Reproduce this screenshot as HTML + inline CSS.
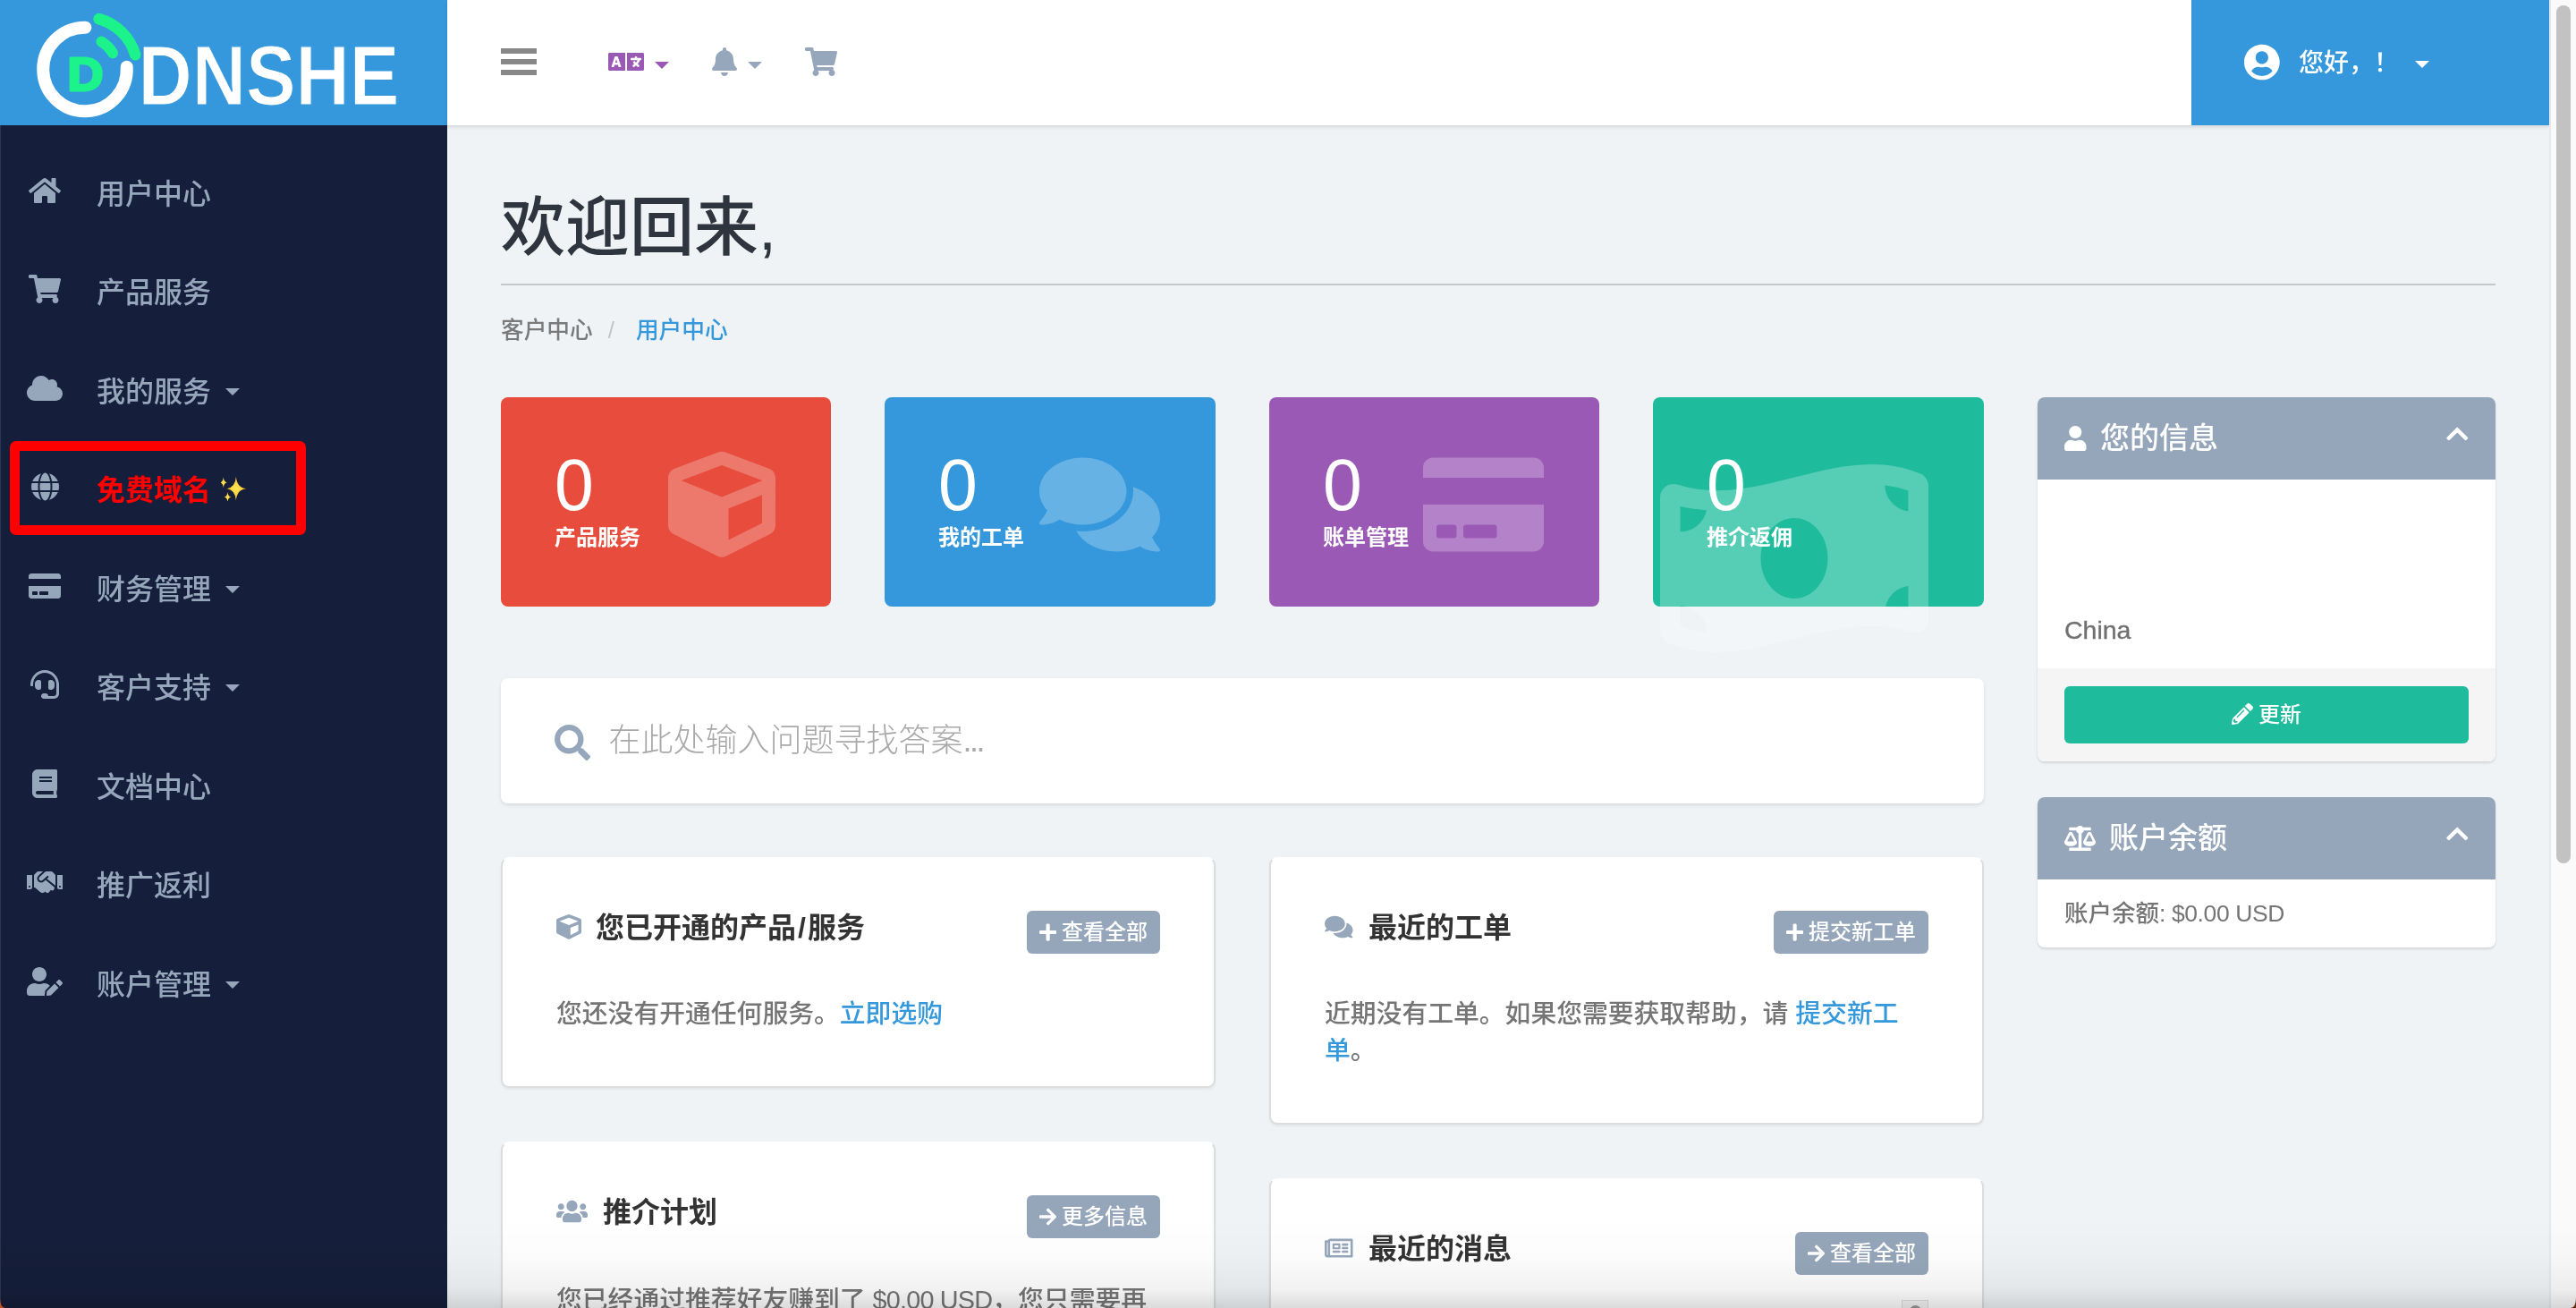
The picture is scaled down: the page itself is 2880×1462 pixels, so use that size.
<!DOCTYPE html>
<html lang="zh-CN">
<head>
<meta charset="utf-8">
<title>客户中心 - DNSHE</title>
<style>
*{box-sizing:border-box;margin:0;padding:0}
html,body{width:2880px;height:1462px;overflow:hidden;background:#eff3f6}
body{position:relative;background:#eff3f6;will-change:transform;font-family:"Liberation Sans","Noto Sans CJK SC",sans-serif;color:#757575;font-size:28px;font-weight:500}
a{color:#3498db;text-decoration:none}
svg{display:block}
.abs{position:absolute}
/* sidebar */
#sidebar{position:absolute;left:0;top:0;width:500px;height:1462px;background:#151e3a;box-shadow:inset 1px 0 0 rgba(255,255,255,.1)}
#logo{position:absolute;left:0;top:0;width:500px;height:140px;background:#3598dc}
.nav{position:absolute;left:0;width:500px;height:60px;color:#97a7bb;font-size:32px;line-height:60px;font-weight:500}
.nav .ic{position:absolute;left:30px;top:11px;width:40px;height:32px;fill:#97a7bb}
.nav .ic svg{margin:0 auto;height:32px}
.nav .tx{position:absolute;left:108px;top:1px;white-space:nowrap}
.caret{display:inline-block;width:0;height:0;border-left:8px solid transparent;border-right:8px solid transparent;border-top:8px solid currentColor;vertical-align:middle;margin-left:16px;position:relative;top:-3px}
#hl{position:absolute;left:11px;top:493px;width:331px;height:105px;border:11px solid #ff0000;border-radius:7px}
/* topbar */
#topbar{position:absolute;left:500px;top:0;width:2350px;height:140px;background:#fff;box-shadow:0 2px 4px rgba(0,0,0,.12)}
#user{position:absolute;left:2450px;top:0;width:400px;height:140px;background:#3598dc;color:#fff;font-size:28px}
#sb{position:absolute;left:2850px;top:0;width:30px;height:1462px;background:#fafafa;border-left:2px solid #e8e8e8}
#sb i{position:absolute;left:6px;top:6px;width:16px;height:959px;border-radius:8px;background:#c2c2c2}
/* content */
h1{position:absolute;left:560px;top:199px;font-size:72px;font-weight:500;color:#2f353e;line-height:110px;white-space:nowrap}
#hr{position:absolute;left:560px;top:317px;width:2230px;height:2px;background:#c3c7ca}
#bc{position:absolute;left:560px;top:349px;font-size:25.7px;line-height:40px;color:#7a7a7a;white-space:nowrap}
#bc span{color:#c4c4c4;margin:0 24px 0 17px}
.stat{position:absolute;top:444px;width:369.5px;height:233.5px;border-radius:8px;color:#fff}
.stat .n{position:absolute;left:60px;top:50px;font-size:82px;line-height:96px;transform:scaleX(.96);transform-origin:0 0}
.stat .l{position:absolute;left:60px;top:139px;font-size:24px;font-weight:700;line-height:36px;white-space:nowrap}
.sic{position:absolute;fill:rgba(255,255,255,.25)}
#search{position:absolute;left:560px;top:758px;width:1658px;height:140px;background:#fff;border-radius:8px;box-shadow:0 2px 4px rgba(0,0,0,.1)}
#search .ph{position:absolute;left:120.5px;top:40px;font-size:36px;line-height:60px;color:#a9a9a9;font-weight:300;white-space:nowrap}
.panel{position:absolute;width:799px;background:#fff;border:2px solid #dcdddd;border-top-color:transparent;border-radius:9px;box-shadow:0 2px 3px rgba(0,0,0,.05)}
.panel h3{position:absolute;left:105px;top:53px;font-size:32px;font-weight:700;color:#333;line-height:48px;white-space:nowrap}
.panel .pi{position:absolute;left:60px;fill:#97a7bb}
.panel .btn{position:absolute;right:60px;top:58px;height:48px;border-radius:6px;background:#96a6ba;color:#fff;font-size:24px;line-height:48px;padding:0 14px 0 14px;white-space:nowrap}
.panel .btn svg{display:inline-block;fill:#fff;height:22px;vertical-align:-3px;margin-right:6px}
.panel p{position:absolute;left:60px;top:153px;width:680px;font-size:28.8px;line-height:41px;color:#757575}
.side{position:absolute;left:2278px;width:512px;background:#fff;border-radius:8px;box-shadow:0 2px 3px rgba(0,0,0,.12);overflow:hidden}
.side .hd{height:92px;background:#96a6ba;color:#fff;font-size:33px;line-height:92px;position:relative}
.side .hd svg{position:absolute;fill:#fff}
.side .hd span{position:absolute;top:0;white-space:nowrap}
#shade{position:absolute;left:0;top:1362px;width:2880px;height:100px;background:linear-gradient(to bottom,rgba(0,0,0,0) 0%,rgba(0,0,0,.015) 45%,rgba(0,0,0,.055) 80%,rgba(0,0,0,.14) 100%);pointer-events:none}
.cnr{position:absolute;top:1450px;width:6px;height:12px}
</style>
</head>
<body>
<h1>欢迎回来,</h1><div id="hr"></div>
<div id="bc">客户中心<span>/</span><a>用户中心</a></div>
<div class="stat" style="left:560px;width:369px;background:#e74c3c"></div>
<div class="stat" style="left:989px;width:370px;background:#3598dc"></div>
<div class="stat" style="left:1419px;width:369px;background:#9b59b6"></div>
<div class="stat" style="left:1848px;width:370px;background:#1ebc9c"></div>
<svg class="sic" style="left:747px;top:504px" width="120.0" height="120" viewBox="0 0 512 512"><path d="M239.100 6.300l-208 78c-18.700 7-31.100 25-31.100 45v225.100c0 18.200 10.300 34.800 26.500 42.900l208 104c13.500 6.800 29.400 6.800 42.900 0l208-104c16.300-8.100 26.500-24.800 26.500-42.900V129.300c0-20-12.400-37.900-31.100-44.900l-208-78C262 2.200 250 2.200 239.100 6.300zM256 68.400l192 72v1.100l-192 78-192-78v-1.100l192-72zm32 356V275.500l160-65v133.900l-160 80z"/></svg>
<svg class="sic" style="left:1162px;top:504px" width="135.0" height="120" viewBox="0 0 576 512"><path d="M416 192c0-88.400-93.100-160-208-160S0 103.600 0 192c0 34.300 14.100 65.900 38 92-13.400 30.200-35.500 54.200-35.800 54.500-2.200 2.300-2.800 5.700-1.500 8.700S4.800 352 8 352c36.600 0 66.900-12.300 88.700-25 32.200 15.700 70.300 25 111.300 25 114.900 0 208-71.600 208-160zm122 220c23.900-26 38-57.700 38-92 0-66.900-53.500-124.200-129.300-148.100.9 6.600 1.300 13.300 1.300 20.100 0 105.900-107.700 192-240 192-10.800 0-21.300-.8-31.700-1.900C207.800 439.600 281.800 480 368 480c41 0 79.100-9.200 111.300-25 21.800 12.700 52.100 25 88.700 25 3.200 0 6.100-1.900 7.300-4.800 1.300-2.900.7-6.300-1.500-8.700-.3-.3-22.400-24.200-35.800-54.500z"/></svg>
<svg class="sic" style="left:1591px;top:504px" width="135.0" height="120" viewBox="0 0 576 512"><path d="M0 432c0 26.5 21.5 48 48 48h480c26.500 0 48-21.500 48-48V256H0v176zm192-68c0-6.600 5.400-12 12-12h136c6.600 0 12 5.400 12 12v40c0 6.600-5.400 12-12 12H204c-6.600 0-12-5.400-12-12v-40zm-128 0c0-6.600 5.400-12 12-12h72c6.600 0 12 5.400 12 12v40c0 6.600-5.400 12-12 12H76c-6.600 0-12-5.400-12-12v-40zM576 80v48H0V80c0-26.500 21.500-48 48-48h480c26.500 0 48 21.500 48 48z"/></svg>
<svg class="sic" style="left:1856px;top:504px" width="300.0" height="240" viewBox="0 0 640 512"><path d="M621.160 54.460C582.370 38.190 543.550 32 504.750 32c-123.170-.01-246.330 62.340-369.500 62.340-30.890 0-61.760-3.920-92.650-13.720-3.470-1.100-6.950-1.620-10.350-1.620C15.040 79 0 92.320 0 110.810v317.260c0 12.630 7.230 24.600 18.840 29.460C57.630 473.810 96.450 480 135.250 480c123.170 0 246.340-62.350 369.510-62.350 30.890 0 61.760 3.920 92.650 13.720 3.470 1.100 6.950 1.620 10.350 1.620 17.210 0 32.250-13.320 32.250-31.810V83.930c-.01-12.640-7.240-24.600-18.850-29.470zM48 132.220c20.120 5.040 41.120 7.570 62.720 8.930C104.840 170.540 79 192.690 48 192.690v-60.470zm0 285v-47.780c34.370 0 62.180 27.270 63.710 61.400-22.530-1.810-43.590-6.310-63.710-13.620zM320 352c-44.190 0-80-42.990-80-96 0-53.020 35.820-96 80-96s80 42.980 80 96c0 53.030-35.830 96-80 96zm272 27.780c-17.520-4.390-35.710-6.850-54.320-8.440 5.870-26.080 27.500-45.880 54.320-49.280v57.720zm0-236.110c-30.890-3.910-54.860-29.700-55.810-61.550 19.540 2.170 38.090 6.230 55.810 12.660v48.890z"/></svg>
<div class="stat" style="left:560px"><div class="n">0</div><div class="l">产品服务</div></div>
<div class="stat" style="left:989px"><div class="n">0</div><div class="l">我的工单</div></div>
<div class="stat" style="left:1419px"><div class="n">0</div><div class="l">账单管理</div></div>
<div class="stat" style="left:1848px"><div class="n">0</div><div class="l">推介返佣</div></div>
<div id="search"><svg style="position:absolute;left:60px;top:52px;fill:#97a7bb" width="40.0" height="40" viewBox="0 0 512 512"><path d="M505 442.700L405.300 343c-4.500-4.500-10.600-7-17-7H372c27.600-35.300 44-79.700 44-128C416 93.100 322.900 0 208 0S0 93.100 0 208s93.100 208 208 208c48.300 0 92.700-16.400 128-44v16.300c0 6.400 2.500 12.500 7 17l99.700 99.700c9.400 9.400 24.600 9.400 33.900 0l28.300-28.300c9.400-9.400 9.400-24.600.1-34zM208 336c-70.700 0-128-57.200-128-128 0-70.700 57.200-128 128-128 70.700 0 128 57.200 128 128 0 70.700-57.200 128-128 128z"/></svg><span class="ph">在此处输入问题寻找答案<span style="letter-spacing:-2.500px">...</span></span></div>
<div class="panel" style="left:560px;top:958px;height:258px"><svg class="pi" style="top:62px" width="28.0" height="28" viewBox="0 0 512 512"><path d="M239.100 6.300l-208 78c-18.700 7-31.100 25-31.100 45v225.100c0 18.200 10.300 34.800 26.500 42.900l208 104c13.500 6.800 29.400 6.800 42.900 0l208-104c16.300-8.100 26.500-24.800 26.500-42.900V129.300c0-20-12.400-37.900-31.100-44.900l-208-78C262 2.200 250 2.200 239.100 6.300zM256 68.400l192 72v1.100l-192 78-192-78v-1.100l192-72zm32 356V275.500l160-65v133.900l-160 80z"/></svg><h3 style="left:104px">您已开通的产品<span style="padding:0 2px">/</span>服务</h3><span class="btn"><svg width="19.25" height="22" viewBox="0 0 448 512"><path d="M416 208H272V64c0-17.670-14.330-32-32-32h-32c-17.670 0-32 14.330-32 32v144H32c-17.670 0-32 14.330-32 32v32c0 17.670 14.330 32 32 32h144v144c0 17.670 14.330 32 32 32h32c17.670 0 32-14.330 32-32V304h144c17.670 0 32-14.330 32-32v-32c0-17.670-14.330-32-32-32z"/></svg>查看全部</span><p>您还没有开通任何服务。<a>立即选购</a></p></div>
<div class="panel" style="left:1419px;top:958px;height:299px"><svg class="pi" style="top:62px" width="31.5" height="28" viewBox="0 0 576 512"><path d="M416 192c0-88.400-93.100-160-208-160S0 103.600 0 192c0 34.300 14.100 65.900 38 92-13.400 30.200-35.500 54.200-35.800 54.500-2.200 2.300-2.800 5.700-1.500 8.700S4.800 352 8 352c36.600 0 66.900-12.300 88.700-25 32.200 15.700 70.300 25 111.300 25 114.900 0 208-71.600 208-160zm122 220c23.900-26 38-57.700 38-92 0-66.900-53.500-124.200-129.300-148.100.9 6.600 1.300 13.300 1.300 20.100 0 105.900-107.700 192-240 192-10.800 0-21.300-.8-31.700-1.900C207.800 439.600 281.800 480 368 480c41 0 79.100-9.200 111.300-25 21.800 12.700 52.100 25 88.700 25 3.200 0 6.100-1.900 7.300-4.800 1.300-2.900.7-6.300-1.500-8.700-.3-.3-22.400-24.200-35.800-54.500z"/></svg><h3 style="left:109px">最近的工单</h3><span class="btn"><svg width="19.25" height="22" viewBox="0 0 448 512"><path d="M416 208H272V64c0-17.670-14.330-32-32-32h-32c-17.670 0-32 14.330-32 32v144H32c-17.670 0-32 14.330-32 32v32c0 17.670 14.330 32 32 32h144v144c0 17.670 14.330 32 32 32h32c17.670 0 32-14.330 32-32V304h144c17.670 0 32-14.330 32-32v-32c0-17.670-14.330-32-32-32z"/></svg>提交新工单</span><p>近期没有工单。如果您需要获取帮助，请 <a>提交新工单</a>。</p></div>
<div class="panel" style="left:560px;top:1276px;height:300px"><svg class="pi" style="top:62px" width="35.0" height="28" viewBox="0 0 640 512"><path d="M96 224c35.300 0 64-28.700 64-64s-28.700-64-64-64-64 28.700-64 64 28.700 64 64 64zm448 0c35.300 0 64-28.700 64-64s-28.700-64-64-64-64 28.700-64 64 28.700 64 64 64zm32 32h-64c-17.600 0-33.500 7.100-45.100 18.600 40.300 22.100 68.900 62 75.100 109.400h66c17.700 0 32-14.300 32-32v-32c0-35.300-28.700-64-64-64zm-256 0c61.900 0 112-50.100 112-112S381.900 32 320 32 208 82.100 208 144s50.100 112 112 112zm76.800 32h-8.300c-20.800 10-43.900 16-68.500 16s-47.600-6-68.500-16h-8.300C179.600 288 128 339.600 128 403.200V432c0 26.500 21.500 48 48 48h288c26.500 0 48-21.500 48-48v-28.800c0-63.600-51.600-115.200-115.200-115.200zm-223.700-13.400C161.500 263.100 145.600 256 128 256H64c-35.300 0-64 28.700-64 64v32c0 17.700 14.300 32 32 32h65.900c6.300-47.400 34.900-87.300 75.200-109.400z"/></svg><h3 style="left:112px">推介计划</h3><span class="btn"><svg width="19.25" height="22" viewBox="0 0 448 512"><path d="M190.500 66.900l22.200-22.200c9.400-9.400 24.600-9.400 33.900 0L441 239c9.400 9.400 9.400 24.600 0 33.900L246.600 467.300c-9.400 9.400-24.600 9.400-33.900 0l-22.200-22.200c-9.500-9.500-9.300-25 .4-34.300L311.400 296H24c-13.300 0-24-10.700-24-24v-32c0-13.300 10.700-24 24-24h287.400L190.900 101.200c-9.800-9.300-10-24.800-.4-34.300z"/></svg>更多信息</span><p><span style="position:relative;top:2px">您已经通过推荐好友赚到了 <span style="letter-spacing:-.8px">$0.00 USD</span>，您只需要再</span></p></div>
<div class="panel" style="left:1419px;top:1317px;height:300px"><svg class="pi" style="top:62px" width="31.5" height="28" viewBox="0 0 576 512"><path d="M552 64H112c-20.858 0-38.643 13.377-45.248 32H24c-13.255 0-24 10.745-24 24v272c0 30.928 25.072 56 56 56h496c13.255 0 24-10.745 24-24V88c0-13.255-10.745-24-24-24zM48 392V144h16v248c0 4.411-3.589 8-8 8s-8-3.589-8-8zm480 8H111.422c.374-2.614.578-5.283.578-8V112h416v288zM172 280h136c6.627 0 12-5.373 12-12v-96c0-6.627-5.373-12-12-12H172c-6.627 0-12 5.373-12 12v96c0 6.627 5.373 12 12 12zm28-80h80v40h-80v-40zm-40 140v-24c0-6.627 5.373-12 12-12h136c6.627 0 12 5.373 12 12v24c0 6.627-5.373 12-12 12H172c-6.627 0-12-5.373-12-12zm192 0v-24c0-6.627 5.373-12 12-12h104c6.627 0 12 5.373 12 12v24c0 6.627-5.373 12-12 12H364c-6.627 0-12-5.373-12-12zm0-144v-24c0-6.627 5.373-12 12-12h104c6.627 0 12 5.373 12 12v24c0 6.627-5.373 12-12 12H364c-6.627 0-12-5.373-12-12zm0 72v-24c0-6.627 5.373-12 12-12h104c6.627 0 12 5.373 12 12v24c0 6.627-5.373 12-12 12H364c-6.627 0-12-5.373-12-12z"/></svg><h3 style="left:109px">最近的消息</h3><span class="btn"><svg width="19.25" height="22" viewBox="0 0 448 512"><path d="M190.500 66.900l22.200-22.200c9.400-9.400 24.600-9.400 33.900 0L441 239c9.400 9.400 9.400 24.600 0 33.900L246.600 467.300c-9.400 9.400-24.600 9.400-33.900 0l-22.200-22.200c-9.500-9.500-9.300-25 .4-34.300L311.400 296H24c-13.300 0-24-10.700-24-24v-32c0-13.300 10.700-24 24-24h287.400L190.900 101.200c-9.800-9.300-10-24.800-.4-34.300z"/></svg>查看全部</span><p></p></div>
<div class="abs" style="left:2126px;top:1453px;width:30px;height:12px;background:#f4f4f4;border:1px solid #ddd"><div class="abs" style="left:8px;top:5px;width:13px;height:13px;border-radius:50%;background:#999"></div></div>
<div class="side" style="top:444px;height:407px"><div class="hd"><svg style="left:30px;top:32px" width="24.5" height="28" viewBox="0 0 448 512"><path d="M224 256c70.700 0 128-57.300 128-128S294.700 0 224 0 96 57.300 96 128s57.300 128 128 128zm89.600 32h-16.700c-22.200 10.200-46.900 16-72.900 16s-50.600-5.800-72.900-16h-16.700C60.200 288 0 348.200 0 422.400V464c0 26.500 21.500 48 48 48h352c26.500 0 48-21.500 48-48v-41.600c0-74.200-60.200-134.400-134.400-134.400z"/></svg><span style="left:70px">您的信息</span><svg style="left:457px;top:27px" width="24.5" height="28" viewBox="0 0 448 512"><path d="M240.971 130.524l194.343 194.343c9.373 9.373 9.373 24.569 0 33.941l-22.667 22.667c-9.357 9.357-24.522 9.375-33.901.040L224 227.495 69.255 381.516c-9.379 9.335-24.544 9.317-33.901-.040l-22.667-22.667c-9.373-9.373-9.373-24.569 0-33.941L207.030 130.525c9.372-9.373 24.568-9.373 33.941-.001z"/></svg></div><div style="height:211px;position:relative"><span class="abs" style="left:30px;top:148px;line-height:40px;font-size:28.500px;color:#707070;-webkit-text-stroke:.35px #707070">China</span></div><div style="height:104px;background:#f5f5f5;position:relative"><div class="abs" style="left:30px;top:20px;width:452px;height:64px;border-radius:6px;background:#1ebc9c;color:#fff;font-size:24px;line-height:64px;text-align:center"><svg style="display:inline-block;fill:#fff;vertical-align:-3px;margin-right:6px" width="24.0" height="24" viewBox="0 0 512 512"><path d="M497.900 142.100l-46.100 46.100c-4.700 4.700-12.300 4.700-17 0l-111-111c-4.700-4.700-4.700-12.300 0-17l46.100-46.100c18.700-18.700 49.100-18.700 67.900 0l60.100 60.100c18.800 18.700 18.800 49.100 0 67.900zM284.200 99.800L21.600 362.400.4 483.900c-2.900 16.400 11.400 30.600 27.800 27.800l121.500-21.300 262.600-262.600c4.700-4.700 4.700-12.300 0-17l-111-111c-4.800-4.700-12.400-4.700-17.100 0zM124.100 339.900c-5.500-5.500-5.500-14.300 0-19.800l154-154c5.500-5.500 14.300-5.500 19.800 0s5.500 14.300 0 19.800l-154 154c-5.500 5.500-14.300 5.500-19.800 0zM88 424h48v36.300l-64.500 11.300-31.100-31.100L51.700 376H88v48z"/></svg>更新</div></div></div>
<div class="side" style="top:891px;height:168px"><div class="hd"><svg style="left:30px;top:32px" width="35.0" height="28" viewBox="0 0 640 512"><path d="M256 336h-.02c0-16.180 1.340-8.730-85.050-181.510-17.650-35.290-68.190-35.360-85.870 0C-2.060 328.750.02 320.330.02 336H0c0 44.180 57.310 80 128 80s128-35.820 128-80zM128 176l72 144H56l72-144zm511.980 160c0-16.180 1.340-8.730-85.050-181.510-17.650-35.290-68.190-35.360-85.870 0-87.120 174.260-85.040 165.840-85.040 181.510H384c0 44.180 57.310 80 128 80s128-35.820 128-80h-.02zM440 320l72-144 72 144H440zm88 128H352V153.250c23.510-10.290 41.160-31.480 46.390-57.250H528c8.840 0 16-7.160 16-16V48c0-8.840-7.160-16-16-16H383.640C369.040 12.680 346.090 0 320 0s-49.040 12.680-63.640 32H112c-8.840 0-16 7.160-16 16v32c0 8.840 7.160 16 16 16h129.610c5.230 25.760 22.870 46.960 46.390 57.250V448H112c-8.840 0-16 7.160-16 16v32c0 8.840 7.160 16 16 16h416c8.840 0 16-7.160 16-16v-32c0-8.840-7.160-16-16-16z"/></svg><span style="left:80px">账户余额</span><svg style="left:457px;top:27px" width="24.5" height="28" viewBox="0 0 448 512"><path d="M240.971 130.524l194.343 194.343c9.373 9.373 9.373 24.569 0 33.941l-22.667 22.667c-9.357 9.357-24.522 9.375-33.901.040L224 227.495 69.255 381.516c-9.379 9.335-24.544 9.317-33.901-.040l-22.667-22.667c-9.373-9.373-9.373-24.569 0-33.941L207.030 130.525c9.372-9.373 24.568-9.373 33.941-.001z"/></svg></div><div style="position:relative;height:76px"><span class="abs" style="left:30px;top:18px;line-height:40px;font-size:26.500px;color:#757575;white-space:nowrap">账户余额<span style="letter-spacing:-.4px">: $0.00 USD</span></span></div></div>
<div id="sidebar">
<div id="logo"><svg width="500" height="140" viewBox="0 0 500 140">
<path d="M 95.41 30.70 A 46.8 46.8 0 1 0 141.71 74.64" fill="none" stroke="#fff" stroke-width="14" stroke-linecap="round"/>
<path d="M 110.63 21.13 A 58.5 58.5 0 0 1 151.18 61.18" fill="none" stroke="#1cf48b" stroke-width="12.6" stroke-linecap="round"/>
<path d="M 113.43 46.58 A 36 36 0 0 1 126.05 59.28" fill="none" stroke="#1cf48b" stroke-width="12" stroke-linecap="round"/>
<text x="75.500" y="101.300" font-family="'Liberation Sans',sans-serif" font-weight="700" font-size="52" fill="#1cf48b" stroke="#1cf48b" stroke-width="3" stroke-linejoin="round" textLength="40" lengthAdjust="spacingAndGlyphs">D</text>
<text x="154.500" y="117" font-family="'Liberation Sans',sans-serif" font-weight="700" font-size="95" fill="#fff" stroke="#3598dc" stroke-width="1.2" textLength="292" lengthAdjust="spacingAndGlyphs">DNSHE</text>
</svg></div>
<div class="nav" style="top:186px"><span class="ic"><svg width="36.0" height="32" viewBox="0 0 576 512"><path d="M280.37 148.26L96 300.11V464a16 16 0 0 0 16 16l112.06-.29a16 16 0 0 0 15.92-16V368a16 16 0 0 1 16-16h64a16 16 0 0 1 16 16v95.64a16 16 0 0 0 16 16.05L464 480a16 16 0 0 0 16-16V300L295.67 148.26a12.19 12.19 0 0 0-15.3 0zM571.6 251.47L488 182.56V44.05a12 12 0 0 0-12-12h-56a12 12 0 0 0-12 12v72.61L318.47 43a48 48 0 0 0-61 0L4.34 251.47a12 12 0 0 0-1.6 16.9l25.5 31A12 12 0 0 0 45.15 301l235.22-193.74a12.19 12.19 0 0 1 15.3 0L530.9 301a12 12 0 0 0 16.9-1.6l25.5-31a12 12 0 0 0-1.7-16.93z"/></svg></span><span class="tx">用户中心</span></div>
<div class="nav" style="top:296px"><span class="ic"><svg width="36.0" height="32" viewBox="0 0 576 512"><path d="M528.12 301.319l47.273-208C578.806 78.301 567.391 64 551.99 64H159.208l-9.166-44.81C147.758 8.021 137.93 0 126.529 0H24C10.745 0 0 10.745 0 24v16c0 13.255 10.745 24 24 24h69.883l70.248 343.435C147.325 417.1 136 435.222 136 456c0 30.928 25.072 56 56 56s56-25.072 56-56c0-15.674-6.447-29.835-16.824-40h209.647C430.447 426.165 424 440.326 424 456c0 30.928 25.072 56 56 56s56-25.072 56-56c0-22.172-12.888-41.332-31.579-50.405l5.517-24.276c3.413-15.018-8.002-29.319-23.403-29.319H218.117l-6.545-32h293.145c11.206 0 20.92-7.754 23.403-18.681z"/></svg></span><span class="tx">产品服务</span></div>
<div class="nav" style="top:407px"><span class="ic"><svg width="40.0" height="32" viewBox="0 0 640 512"><path d="M537.6 226.6c4.1-10.7 6.4-22.4 6.4-34.6 0-53-43-96-96-96-19.7 0-38.1 6-53.3 16.2C367 64.2 315.3 32 256 32c-88.4 0-160 71.6-160 160 0 2.7.1 5.4.2 8.1C40.2 219.8 0 273.2 0 336c0 79.5 64.5 144 144 144h368c70.7 0 128-57.3 128-128 0-61.9-44-113.600-102.400-125.400z"/></svg></span><span class="tx">我的服务<i class="caret"></i></span></div>
<div class="nav" style="top:517px"><span class="ic"><svg width="31.0" height="32" viewBox="0 0 496 512"><path d="M336.5 160C322 70.7 287.8 8 248 8s-74 62.7-88.5 152h177zM152 256c0 22.2 1.2 43.5 3.3 64h185.300c2.100-20.500 3.300-41.800 3.300-64s-1.200-43.500-3.300-64H155.300c-2.100 20.500-3.300 41.800-3.300 64zm324.700-96c-28.600-67.900-86.500-120.400-158-141.600 24.400 33.800 41.200 84.700 50 141.600h108zM177.200 18.400C105.800 39.600 47.800 92.100 19.300 160h108c8.700-56.900 25.500-107.800 49.900-141.600zM487.400 192H372.700c2.100 21 3.300 42.500 3.300 64s-1.200 43-3.300 64h114.600c5.500-20.500 8.600-41.800 8.600-64s-3.100-43.500-8.500-64zM120 256c0-21.500 1.200-43 3.300-64H8.600C3.200 212.500 0 233.800 0 256s3.200 43.500 8.600 64h114.600c-2-21-3.200-42.500-3.200-64zm39.500 96c14.500 89.300 48.700 152 88.500 152s74-62.700 88.500-152h-177zm159.300 141.600c71.400-21.200 129.400-73.700 158-141.600h-108c-8.800 56.900-25.600 107.800-50 141.600zM19.300 352c28.600 67.900 86.500 120.400 158 141.600-24.400-33.800-41.200-84.700-50-141.600h-108z"/></svg></span><span class="tx" style="color:#ff0000;font-weight:700">免费域名<svg class="spark" width="40" height="32" viewBox="0 0 40 32" style="position:absolute;left:139px;top:9.500px"><defs><radialGradient id="sg" cx="50%" cy="50%" r="50%"><stop offset="0" stop-color="#ffe45a"/><stop offset=".55" stop-color="#ffd23a"/><stop offset="1" stop-color="#f2a024"/></radialGradient></defs><path fill="url(#sg)" d="M16.900 5 Q17.700 17.700 28.400 18.650 Q17.700 19.600 16.900 32 Q16.100 19.600 5.900 18.650 Q16.100 17.700 16.900 5Z" transform="translate(0,-0.500)"/><path fill="url(#sg)" d="M2.800 4.900 Q3.200 10.900 7.100 11.300 Q3.200 11.700 2.800 17.700 Q2.400 11.700 -1.500 11.300 Q2.400 10.900 2.800 4.900Z"/><path fill="url(#sg)" d="M7.500 21.700 Q7.900 27.200 11.800 27.600 Q7.900 28 7.500 33.500 Q7.100 28 3.200 27.600 Q7.100 27.200 7.500 21.700Z"/></svg></span></div>
<div class="nav" style="top:628px"><span class="ic"><svg width="36.0" height="32" viewBox="0 0 576 512"><path d="M0 432c0 26.5 21.5 48 48 48h480c26.500 0 48-21.500 48-48V256H0v176zm192-68c0-6.600 5.400-12 12-12h136c6.600 0 12 5.400 12 12v40c0 6.600-5.400 12-12 12H204c-6.600 0-12-5.400-12-12v-40zm-128 0c0-6.600 5.400-12 12-12h72c6.600 0 12 5.400 12 12v40c0 6.600-5.400 12-12 12H76c-6.600 0-12-5.400-12-12v-40zM576 80v48H0V80c0-26.500 21.500-48 48-48h480c26.500 0 48 21.500 48 48z"/></svg></span><span class="tx">财务管理<i class="caret"></i></span></div>
<div class="nav" style="top:738px"><span class="ic"><svg width="32.0" height="32" viewBox="0 0 512 512"><path d="M192 208c0-17.670-14.330-32-32-32h-16c-35.350 0-64 28.650-64 64v48c0 35.350 28.650 64 64 64h16c17.670 0 32-14.330 32-32V208zm176 144c35.350 0 64-28.650 64-64v-48c0-35.350-28.650-64-64-64h-16c-17.670 0-32 14.330-32 32v112c0 17.670 14.330 32 32 32h16zM256 0C113.180 0 4.580 118.830 0 256v16c0 8.840 7.160 16 16 16h16c8.840 0 16-7.160 16-16v-16c0-114.690 93.310-208 208-208s208 93.310 208 208h-.12c.08 2.430.12 165.720.12 165.720 0 23.350-18.930 42.280-42.280 42.280H320c0-26.510-21.490-48-48-48h-32c-26.510 0-48 21.490-48 48s21.490 48 48 48h181.720c49.860 0 90.280-40.420 90.280-90.280V256C507.420 118.830 398.820 0 256 0z"/></svg></span><span class="tx">客户支持<i class="caret"></i></span></div>
<div class="nav" style="top:849px"><span class="ic"><svg width="28.0" height="32" viewBox="0 0 448 512"><path d="M448 360V24c0-13.300-10.700-24-24-24H96C43 0 0 43 0 96v320c0 53 43 96 96 96h328c13.300 0 24-10.700 24-24v-16c0-7.500-3.500-14.300-8.900-18.700-4.200-15.400-4.200-59.300 0-74.700 5.400-4.300 8.900-11.100 8.900-18.600zM128 134c0-3.300 2.700-6 6-6h212c3.300 0 6 2.700 6 6v20c0 3.300-2.700 6-6 6H134c-3.300 0-6-2.700-6-6v-20zm0 64c0-3.300 2.700-6 6-6h212c3.300 0 6 2.700 6 6v20c0 3.300-2.700 6-6 6H134c-3.300 0-6-2.700-6-6v-20zm253.400 250H96c-17.700 0-32-14.300-32-32 0-17.600 14.400-32 32-32h285.400c-1.900 17.100-1.900 46.900 0 64z"/></svg></span><span class="tx">文档中心</span></div>
<div class="nav" style="top:959px"><span class="ic"><svg width="40.0" height="32" viewBox="0 0 640 512"><path d="M434.700 64h-85.900c-8 0-15.700 3-21.600 8.400l-98.300 90c-.1.100-.2.300-.3.400-16.600 15.600-16.300 40.500-2.100 56 12.700 13.900 39.400 17.600 56.100 2.700.1-.1.300-.1.400-.2l79.900-73.200c6.500-5.900 16.700-5.500 22.600 1 6 6.500 5.500 16.600-1 22.600l-26.100 23.900L504 313.800c2.900 2.400 5.500 5 7.900 7.700V128l-54.600-54.600c-5.900-6-14.100-9.400-22.600-9.400zM544 128.200v223.900c0 17.700 14.300 32 32 32h64V128.200h-96zm48 223.900c-8.800 0-16-7.200-16-16s7.200-16 16-16 16 7.200 16 16-7.200 16-16 16zM0 384h64c17.700 0 32-14.300 32-32V128.200H0V384zm48-63.900c8.800 0 16 7.200 16 16s-7.200 16-16 16-16-7.200-16-16c0-8.900 7.200-16 16-16zm435.900 18.600L334.600 217.500l-30 27.500c-29.700 27.100-75.200 24.500-101.700-4.400-26.900-29.400-24.800-74.900 4.400-101.700L289.100 64h-83.800c-8.500 0-16.600 3.400-22.600 9.400L128 128v223.900h18.300l90.500 81.900c27.400 22.300 67.700 18.100 90-9.300l.2-.2 17.900 15.500c15.900 13 39.400 10.500 52.300-5.400l31.400-38.600 5.400 4.400c13.700 11.100 33.900 9.100 45-4.700l9.500-11.700c11.200-13.800 9.100-33.900-4.600-45.100z"/></svg></span><span class="tx">推广返利</span></div>
<div class="nav" style="top:1070px"><span class="ic"><svg width="40.0" height="32" viewBox="0 0 640 512"><path d="M224 256c70.700 0 128-57.300 128-128S294.700 0 224 0 96 57.300 96 128s57.300 128 128 128zm89.600 32h-16.700c-22.200 10.200-46.900 16-72.900 16s-50.600-5.800-72.900-16h-16.700C60.200 288 0 348.200 0 422.400V464c0 26.500 21.500 48 48 48h274.900c-2.400-6.800-3.400-14-2.600-21.300l6.800-60.900 1.200-11.100 7.900-7.900 77.300-77.300c-24.500-27.700-60-45.500-99.900-45.500zm45.300 145.300l-6.800 61c-1.100 10.200 7.500 18.800 17.600 17.600l60.900-6.800 137.900-137.900-71.700-71.700-137.900 137.800zM633 268.900L595.100 231c-9.300-9.300-24.500-9.300-33.800 0l-37.800 37.800-4.100 4.100 71.800 71.700 41.800-41.800c9.300-9.400 9.300-24.500 0-33.900z"/></svg></span><span class="tx">账户管理<i class="caret"></i></span></div>
<div id="hl"></div>
</div>
<div id="topbar">
<div class="abs" style="left:60px;top:54px;width:40px;height:6px;background:#888;box-shadow:0 12px 0 #888,0 24px 0 #888"></div>
<svg style="position:absolute;left:180px;top:53px;fill:#9b59b6" width="40.0" height="32" viewBox="0 0 640 512"><path d="M152.100 236.200c-3.500-12.100-7.800-33.200-7.800-33.200h-.5s-4.300 21.100-7.800 33.200l-11.100 37.500H163zM616 96H336v320h280c13.300 0 24-10.700 24-24V120c0-13.300-10.700-24-24-24zm-24 120c0 6.600-5.400 12-12 12h-11.400c-6.900 23.600-21.700 47.400-42.700 69.900 8.400 6.400 17.100 12.500 26.100 18 5.500 3.400 7.300 10.500 4.100 16.200l-7.900 13.900c-3.400 5.900-10.900 7.800-16.700 4.300-12.600-7.800-24.500-16.100-35.400-24.900-10.900 8.700-22.700 17.100-35.400 24.900-5.800 3.500-13.300 1.600-16.700-4.300l-7.900-13.900c-3.200-5.600-1.400-12.800 4.200-16.200 9.300-5.700 18-11.700 26.100-18-7.900-8.400-14.900-17-21-25.700-4-5.700-2.200-13.600 3.700-17.100l6.500-3.900 7.300-4.300c5.400-3.200 12.400-1.700 16 3.400 5 7 10.800 14 17.400 20.900 13.500-14.200 23.800-28.900 30-43.200H412c-6.600 0-12-5.400-12-12v-16c0-6.600 5.400-12 12-12h64v-16c0-6.600 5.400-12 12-12h16c6.600 0 12 5.400 12 12v16h64c6.600 0 12 5.400 12 12zM0 120v272c0 13.300 10.700 24 24 24h280V96H24c-13.300 0-24 10.700-24 24zm58.900 216.100L116.400 167c1.700-4.900 6.200-8.100 11.400-8.100h32.500c5.100 0 9.700 3.300 11.400 8.100l57.500 169.100c2.600 7.800-3.100 15.900-11.400 15.900h-22.900a12 12 0 0 1-11.500-8.600l-9.400-31.900h-60.200l-9.100 31.800c-1.500 5.100-6.200 8.700-11.500 8.700H70.300c-8.200 0-14-8.100-11.400-15.900z"/></svg>
<i class="caret" style="position:absolute;margin-left:12px;left:220px;top:69px;color:#9b59b6"></i>
<svg style="position:absolute;left:296px;top:53px;fill:#97a7bb" width="28.0" height="32" viewBox="0 0 448 512"><path d="M224 512c35.320 0 63.970-28.650 63.970-64H160.030c0 35.350 28.650 64 63.970 64zm215.390-149.710c-19.320-20.760-55.470-51.990-55.470-154.290 0-77.700-54.480-139.900-127.940-155.160V32c0-17.670-14.320-32-31.980-32s-31.980 14.330-31.980 32v20.840C118.560 68.100 64.080 130.300 64.080 208c0 102.300-36.150 133.530-55.470 154.290-6 6.450-8.660 14.160-8.610 21.710.11 16.400 12.980 32 32.100 32h383.800c19.120 0 32-15.600 32.100-32 .05-7.550-2.610-15.270-8.610-21.710z"/></svg>
<i class="caret" style="position:absolute;margin-left:12px;left:324px;top:69px;color:#97a7bb"></i>
<svg style="position:absolute;left:400px;top:53px;fill:#97a7bb" width="36.0" height="32" viewBox="0 0 576 512"><path d="M528.12 301.319l47.273-208C578.806 78.301 567.391 64 551.99 64H159.208l-9.166-44.81C147.758 8.021 137.93 0 126.529 0H24C10.745 0 0 10.745 0 24v16c0 13.255 10.745 24 24 24h69.883l70.248 343.435C147.325 417.1 136 435.222 136 456c0 30.928 25.072 56 56 56s56-25.072 56-56c0-15.674-6.447-29.835-16.824-40h209.647C430.447 426.165 424 440.326 424 456c0 30.928 25.072 56 56 56s56-25.072 56-56c0-22.172-12.888-41.332-31.579-50.405l5.517-24.276c3.413-15.018-8.002-29.319-23.403-29.319H218.117l-6.545-32h293.145c11.206 0 20.92-7.754 23.403-18.681z"/></svg>
</div>
<div id="user">
<svg style="position:absolute;left:59px;top:49px;fill:#fff" width="39.72" height="41" viewBox="0 0 496 512"><path d="M248 8C111 8 0 119 0 256s111 248 248 248 248-111 248-248S385 8 248 8zm0 96c48.600 0 88 39.400 88 88s-39.400 88-88 88-88-39.400-88-88 39.400-88 88-88zm0 344c-58.700 0-111.300-26.600-146.500-68.200 18.800-35.400 55.600-59.800 98.500-59.800 2.400 0 4.800.4 7.100 1.100 13 4.200 26.600 6.900 40.900 6.900 14.300 0 28-2.700 40.900-6.900 2.300-.7 4.700-1.100 7.100-1.100 42.900 0 79.700 24.400 98.500 59.800C359.300 421.400 306.700 448 248 448z"/></svg>
<span class="abs" style="left:120px;top:50px;line-height:42px;white-space:nowrap">您好，！</span>
<i class="caret" style="position:absolute;margin-left:12px;left:238px;top:68px;color:#fff"></i>
</div>
<div id="sb"><i></i></div>
<div id="shade"></div>
<svg class="cnr" style="left:0" viewBox="0 0 6 12"><path d="M0 0 Q0 12 6 12 L0 12Z" fill="#c2521f"/></svg>
<svg class="cnr" style="left:2874px" viewBox="0 0 6 12"><path d="M6 0 Q6 12 0 12 L6 12Z" fill="#6b2a14"/></svg>
</body>
</html>
